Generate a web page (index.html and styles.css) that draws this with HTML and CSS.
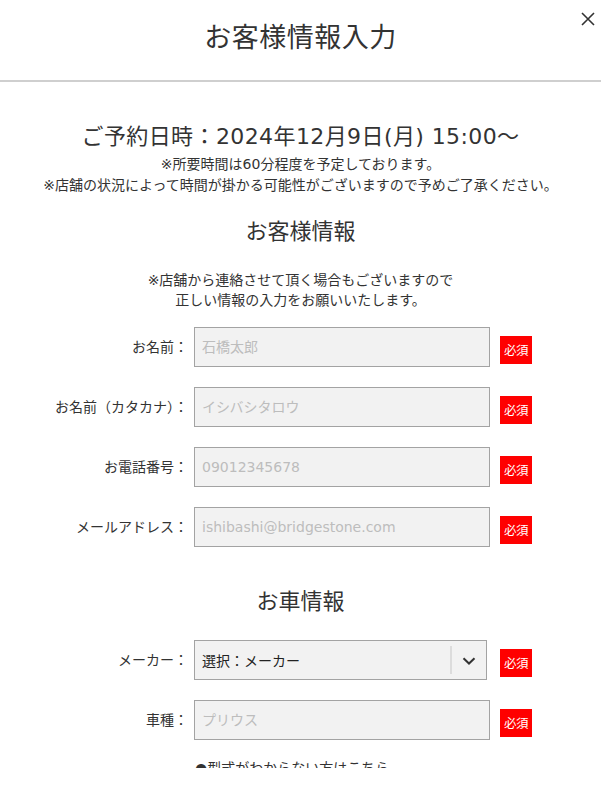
FILE: index.html
```html
<!DOCTYPE html>
<html lang="ja">
<head>
<meta charset="utf-8">
<title>お客様情報入力</title>
<link rel="stylesheet" href="styles.css">
</head>
<body>
<div class="modal">
  <header class="modal-header">
    <h1 class="modal-title">お客様情報入力</h1>
    <button class="close" aria-label="閉じる">
      <svg width="14" height="14" viewBox="0 0 14 14"><path d="M1 1L13 13M13 1L1 13" stroke="#333" stroke-width="1.6" fill="none"/></svg>
    </button>
  </header>
  <div class="modal-body">
    <p class="reserve">ご予約日時：2024年12月9日(月) 15:00〜</p>
    <p class="notes">※所要時間は60分程度を予定しております。<br>※店舗の状況によって時間が掛かる可能性がございますので予めご了承ください。</p>

    <h2 class="section-title">お客様情報</h2>
    <p class="section-note">※店舗から連絡させて頂く場合もございますので<br>正しい情報の入力をお願いいたします。</p>

    <div class="form">
      <div class="row">
        <label class="label">お名前：</label>
        <div class="field"><input class="input" placeholder="石橋太郎"></div>
        <span class="badge">必須</span>
      </div>
      <div class="row">
        <label class="label">お名前（カタカナ）：</label>
        <div class="field"><input class="input" placeholder="イシバシタロウ"></div>
        <span class="badge">必須</span>
      </div>
      <div class="row">
        <label class="label">お電話番号：</label>
        <div class="field"><input class="input" placeholder="09012345678"></div>
        <span class="badge">必須</span>
      </div>
      <div class="row">
        <label class="label">メールアドレス：</label>
        <div class="field"><input class="input" placeholder="ishibashi@bridgestone.com"></div>
        <span class="badge">必須</span>
      </div>
    </div>

    <h2 class="section-title car-title">お車情報</h2>

    <div class="form car-form">
      <div class="row">
        <label class="label">メーカー：</label>
        <div class="field">
          <div class="select">
            <span class="select-text">選択：メーカー</span>
            <span class="select-divider"></span>
            <svg class="chevron" width="14" height="8" viewBox="0 0 14 8"><path d="M1.5 1.2L7 6.5L12.5 1.2" stroke="#333" stroke-width="2" fill="none"/></svg>
          </div>
        </div>
        <span class="badge">必須</span>
      </div>
      <div class="row">
        <label class="label">車種：</label>
        <div class="field"><input class="input" placeholder="プリウス"></div>
        <span class="badge">必須</span>
      </div>
    </div>
    <p class="link-line">●型式がわからない方はこちら</p>
  </div>
</div>
</body>
</html>
```

FILE: styles.css
```css
* { box-sizing: border-box; }
html, body { margin: 0; padding: 0; background: #fff; }
body {
  font-family: "DejaVu Sans", "Noto Sans CJK JP", sans-serif;
  color: #333;
}
.modal {
  width: 601px;
  height: 788px;
  display: flex;
  flex-direction: column;
  padding-bottom: 20px;
  overflow: hidden;
}
.modal-header {
  position: relative;
  height: 82px;
  flex: none;
  border-bottom: 2px solid #cfcfcf;
  display: flex;
  align-items: center;
  justify-content: center;
}
.modal-title {
  margin: 0 0 4px 0;
  font-weight: normal;
  font-size: 27px;
  line-height: 36px;
  letter-spacing: 0.5px;
  color: #333;
}
.close {
  position: absolute;
  top: 12px;
  right: 6px;
  width: 14px;
  height: 14px;
  padding: 0;
  border: 0;
  background: none;
  display: block;
}
.close svg { display: block; }
.modal-body {
  flex: 1;
  overflow: hidden;
  text-align: center;
}
.reserve {
  margin: 40px 0 0 0;
  font-size: 22px;
  line-height: 30px;
  letter-spacing: 0.4px;
  color: #333;
}
.notes {
  margin: 2px 0 0 0;
  font-size: 14px;
  line-height: 21px;
  color: #333;
}
.section-title {
  margin: 21px 0 0 0;
  font-weight: normal;
  font-size: 22px;
  line-height: 30px;
  color: #333;
}
.section-note {
  margin: 23px 0 0 0;
  font-size: 14px;
  line-height: 20px;
  color: #333;
}
.form {
  margin: 17px 0 0 36px;
  display: flex;
  flex-direction: column;
  gap: 20px;
  text-align: left;
}
.row {
  display: flex;
  align-items: flex-start;
}
.label {
  width: 152px;
  margin-top: 10px;
  font-size: 14px;
  line-height: 20px;
  text-align: right;
  white-space: nowrap;
  color: #333;
}
.field {
  width: 296px;
  margin-left: 6px;
}
.input {
  display: block;
  width: 296px;
  height: 40px;
  margin: 0;
  padding: 0 7px;
  border: 1px solid #a3a3a3;
  border-radius: 0;
  background: #f2f2f2;
  font-family: "DejaVu Sans", "Noto Sans CJK JP", sans-serif;
  font-size: 14px;
  color: #333;
  outline: none;
}
.input::placeholder { color: #bdbdbd; }
.badge {
  margin: 9px 0 0 10px;
  width: 32px;
  height: 28px;
  background: #ff0000;
  color: #fff;
  font-size: 12.5px;
  line-height: 28px;
  text-align: center;
  letter-spacing: -0.5px;
  white-space: nowrap;
  font-family: "Noto Sans CJK JP", sans-serif;
}
.car-title { margin-top: 40px; }
.car-form { margin-top: 23px; }
.select {
  width: 293px;
  height: 40px;
  border: 1px solid #a3a3a3;
  background: #f2f2f2;
  display: flex;
  align-items: center;
  padding-left: 7px;
}
.select-text {
  flex: 1;
  font-size: 14px;
  color: #222;
}
.select-divider {
  width: 2px;
  height: 28px;
  background: #dcdcdc;
}
.chevron {
  display: block;
  margin: 1px 10px 0 10px;
}
.link-line {
  margin: 18px 0 0 195px;
  text-align: left;
  font-size: 14px;
  line-height: 20px;
  color: #333;
}
```
